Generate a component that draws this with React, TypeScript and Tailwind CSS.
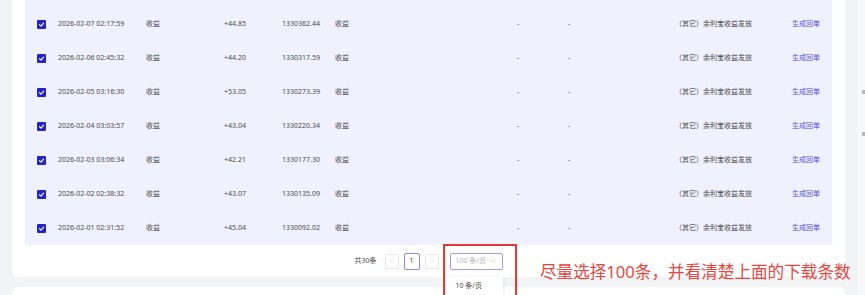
import { ChevronLeft, ChevronRight, ChevronDown } from "lucide-react";

const rows = [
  { time: "2026-02-07 02:17:59", amount: "+44.85", balance: "1330362.44" },
  { time: "2026-02-06 02:45:32", amount: "+44.20", balance: "1330317.59" },
  { time: "2026-02-05 03:16:30", amount: "+53.05", balance: "1330273.39" },
  { time: "2026-02-04 03:03:57", amount: "+43.04", balance: "1330220.34" },
  { time: "2026-02-03 03:06:34", amount: "+42.21", balance: "1330177.30" },
  { time: "2026-02-02 02:38:32", amount: "+43.07", balance: "1330135.09" },
  { time: "2026-02-01 02:31:52", amount: "+45.04", balance: "1330092.02" },
];

function Checkbox() {
  return (
    <span className="flex h-[9px] w-[9px] items-center justify-center rounded-[1px] bg-[#2424c8]">
      <svg viewBox="0 0 10 10" className="h-[7px] w-[7px]">
        <path d="M2 5.2 L4.2 7.2 L8 3" fill="none" stroke="#fff" strokeWidth="1.6" strokeLinecap="round" strokeLinejoin="round" />
      </svg>
    </span>
  );
}

function Row({ time, amount, balance }: { time: string; amount: string; balance: string }) {
  return (
    <div className="grid h-[34px] grid-cols-[21px_88px_78px_58px_53px_182px_51px_107px_117px_1fr] items-center pl-[12px] text-[7px] text-[#4a4a4a]">
      <Checkbox />
      <span>{time}</span>
      <span>收益</span>
      <span>{amount}</span>
      <span>{balance}</span>
      <span>收益</span>
      <span>-</span>
      <span>-</span>
      <span>（其它）余利宝收益发放</span>
      <span className="text-[#5a52d8]">生成回单</span>
    </div>
  );
}

export default function App() {
  return (
    <div
      className="relative flex h-[295px] w-[865px] overflow-hidden bg-[#f2f3f5]"
      style={{ fontFamily: '"Noto Sans", "Noto Sans CJK SC", sans-serif' }}
    >
      <div className="flex w-[845px] flex-col pl-[12px]">
        <div className="rounded-b-[6px] bg-white px-[13px]">
          <div className="bg-[#eff1fe]">
            <div className="h-[7px]" />
            {rows.map((r) => (
              <Row key={r.time} {...r} />
            ))}
          </div>
          <div className="flex h-[32px] items-center justify-center text-[7px] text-[#4a4a4a]">
            <span className="mr-[8px]">共30条</span>
            <span className="flex h-[15px] w-[14px] items-center justify-center rounded-[2px] border border-[#e6e6ea] text-[#c4c4cc]">
              <ChevronLeft className="h-[8px] w-[8px]" strokeWidth={1.5} />
            </span>
            <span className="ml-[5px] flex h-[17px] w-[16px] items-center justify-center rounded-[2px] border border-[#8f88e2] text-[#333]">
              1
            </span>
            <span className="ml-[5px] flex h-[15px] w-[14px] items-center justify-center rounded-[2px] border border-[#e6e6ea] text-[#c4c4cc]">
              <ChevronRight className="h-[8px] w-[8px]" strokeWidth={1.5} />
            </span>
            <div className="relative ml-[11px]">
              <div className="flex h-[17px] w-[53px] items-center justify-between rounded-[2px] border border-[#a29de8] px-[5px] text-[#b4b4bc]">
                <span>100 条/页</span>
                <ChevronDown className="h-[8px] w-[8px]" strokeWidth={1.5} />
              </div>
              <div className="absolute left-[-4px] top-[24px] h-[40px] w-[57px] bg-white shadow-[0_1px_4px_rgba(0,0,0,0.12)]">
                <div className="px-[10px] pt-[4px] text-[#4a4a4a]">10 条/页</div>
              </div>
            </div>
          </div>
        </div>
        <div className="mt-[10px] h-[20px] rounded-t-[6px] bg-white" />
      </div>
      <div className="w-[12px]" />
      <div className="flex flex-1 flex-col items-end gap-[38px] bg-[#f8f8f9] pt-[90px]">
        <span className="h-[4px] w-[3px] bg-[#b8b8bc]" />
        <span className="h-[4px] w-[3px] bg-[#b8b8bc]" />
      </div>

      <div className="absolute left-[443px] top-[244px] h-[70px] w-[74px] border-2 border-[#e53935]" />
      <div className="absolute left-[540px] top-[260px] text-[16.6px] leading-[24px] text-[#e8453e]">
        尽量选择100条，并看清楚上面的下载条数
      </div>
    </div>
  );
}
